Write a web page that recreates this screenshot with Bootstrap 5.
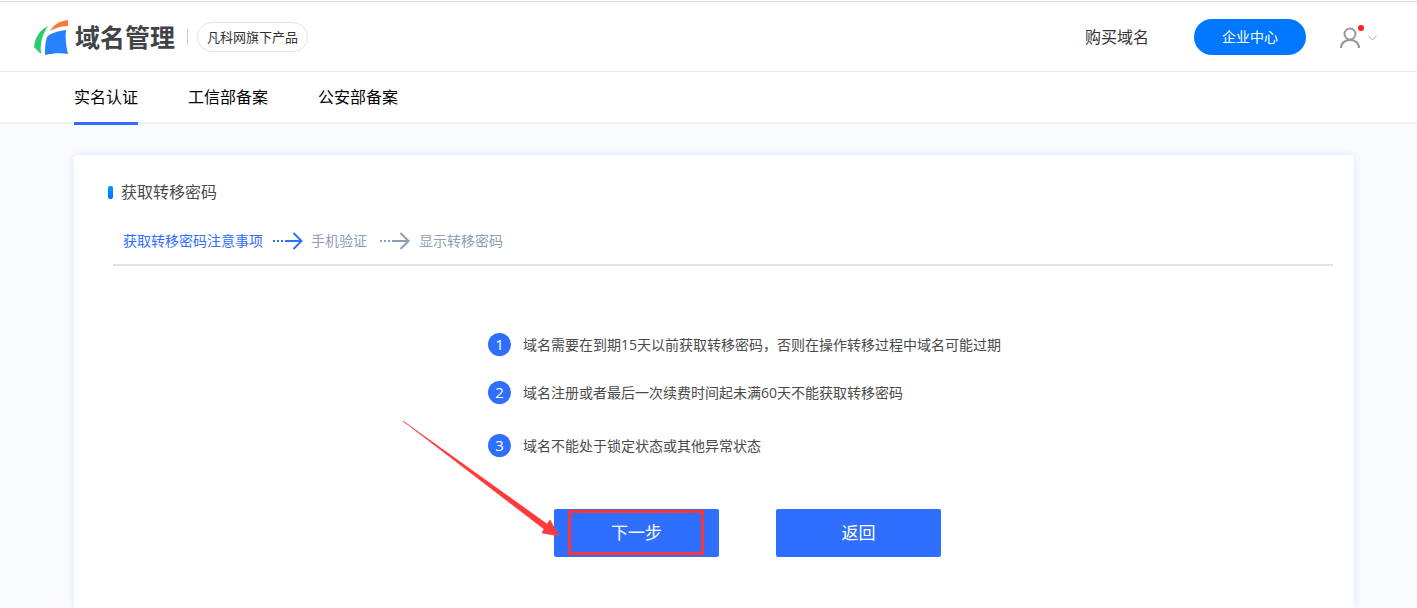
<!DOCTYPE html>
<html lang="zh-CN">
<head>
<meta charset="utf-8">
<meta name="viewport" content="width=device-width, initial-scale=1">
<title>域名管理</title>
<link rel="stylesheet" href="https://cdn.jsdelivr.net/npm/bootstrap@5.3.0/dist/css/bootstrap.min.css">
<style>
  body { font-family: "Open Sans", "Noto Sans CJK SC", sans-serif; font-size: 14px; line-height: 20px; color: #4a4a4a; background: #f9fbff; }
  a { text-decoration: none; }
  .top-gap { height: 1px; }
  .site-header { height: 71px; border-top: 1px solid #d9dbdc; border-bottom: 1px solid #ebebeb; padding: 0 40px 0 34px; }
  .brand-name { font-size: 25px; line-height: 36px; font-weight: 700; color: #414348; margin-left: 6px; }
  .brand-rule { width: 1px; height: 16px; background: #ccc; margin: 0 9px 0 12px; }
  .family-link { height: 30px; padding: 0 9px; border: 1px solid #e3e3e3; border-radius: 15px; font-size: 13px; line-height: 28px; color: #333; }
  .buy-link { font-size: 16px; color: #333; margin-right: 45px; }
  .center-btn { width: 112px; height: 36px; background: #0077ff; color: #fff; font-size: 14px; line-height: 20px; margin-right: 33px; padding: 0; border: 0; }
  .center-btn:hover { background: #0069e6; color: #fff; }
  .page-wrap { width: 100%; max-width: 1291px; padding-left: 11px; margin: 0 auto; }
  .section-nav { background: #fff; border-bottom: 1px solid #ebf0f9; box-shadow: 0 1px 2px #eef3fb; }
  .section-nav .page-wrap { height: 50px; gap: 50px; }
  .tab-link { height: 53px; line-height: 50px; font-size: 16px; color: #000; border-bottom: 3px solid transparent; }
  .tab-link.active { border-color: #2e6fff; }
  .panel { margin-top: 32px; padding: 25px 21px 48px 34px; background: #fff; border-radius: 4px 4px 0 0; box-shadow: 0 0 8px #dae7fa; }
  .panel-title { font-size: 16px; line-height: 24px; font-weight: 400; color: #4a4a4a; gap: 8px; }
  .title-mark { width: 5px; height: 13px; border-radius: 2px; background: linear-gradient(#009dff, #0070ff); }
  .steps { margin: 22px 0 0 5px; padding: 5px 0 13px 10px; border-bottom: 2px solid #e3e3e3; color: #8e9eb2; gap: 8px; }
  .steps .current { color: #2e6fff; }
  .notice-area { padding-left: 49px; margin-top: 67px; }
  .notice { width: 514px; max-width: 100%; }
  .notice li { gap: 12px; margin-bottom: 25px; }
  .notice li:nth-child(2) { margin-bottom: 30px; }
  .num { width: 23px; height: 23px; flex: none; border-radius: 50%; background: #2e6fff; color: #fff; font-size: 15px; line-height: 23px; text-align: center; }
  .actions { gap: 57px; padding-left: 66px; margin-top: 52px; }
  .act { width: 165px; height: 48px; border: 0; border-radius: 2px; background: #2e6fff; color: #fff; font-size: 17px; line-height: 24px; padding: 0; }
  .act:hover { background: #1f60f0; color: #fff; }
  .marker-box { inset: 1px 15px 2px 14px; border: 3px solid #ff3535; }
  .marker-arrow { right: 160px; bottom: 19px; }
</style>
</head>
<body class="d-flex flex-column min-vh-100">
<div class="top-gap bg-white"></div>
<header class="site-header bg-white d-flex align-items-center">
  <a href="#" class="d-flex align-items-center" aria-label="域名管理">
    <svg width="35" height="38" viewBox="0 -2 35 38">
      <path d="M14 6C6 10 1 17 0 27l7 7c-1-11 1-19 7-28Z" fill="#2dcc70"/>
      <path d="M16 11C20 4 26 1 34 0v6c-7 0-13 2-18 5Z" fill="#ff7836"/>
      <path d="M32 10C24 11 17 13 13 17c-2 6-2 12-2 18 9-2 16-2 23-1-2-8-3-16-2-24Z" fill="#2681ff"/>
    </svg>
    <span class="brand-name">域名管理</span>
  </a>
  <span class="brand-rule"></span>
  <a href="#" class="family-link">凡科网旗下产品</a>
  <a href="#" class="buy-link ms-auto">购买域名</a>
  <button type="button" class="btn center-btn rounded-pill">企业中心</button>
  <button type="button" class="btn p-0 border-0 d-flex" aria-label="用户">
    <svg width="38" height="26" viewBox="0 0 38 26" fill="none">
      <g stroke="#999" stroke-width="2"><circle cx="11" cy="10" r="5.5"/><path d="M2 24c0-5 4-8 9-8s9 3 9 8"/></g>
      <circle cx="22" cy="4" r="3" fill="#ff1f1f"/>
      <path d="m29.500 12 4 4 4-4" stroke="#aaa"/>
    </svg>
  </button>
</header>
<nav class="section-nav">
  <div class="page-wrap d-flex">
    <a href="#" class="tab-link active" aria-current="page">实名认证</a>
    <a href="#" class="tab-link">工信部备案</a>
    <a href="#" class="tab-link">公安部备案</a>
  </div>
</nav>
<main class="page-wrap flex-grow-1 d-flex flex-column">
  <section class="panel flex-grow-1">
    <h1 class="panel-title d-flex align-items-center mb-0"><span class="title-mark"></span>获取转移密码</h1>
    <div class="steps d-flex align-items-center">
      <span class="current">获取转移密码注意事项</span>
      <svg class="current" width="32" height="18" viewBox="0 0 32 18" fill="none" stroke="currentColor" stroke-width="2"><path d="M2 9h11" stroke-dasharray="2 2"/><path d="M14 9h16M22.500 1l8 8-8 8"/></svg>
      <span>手机验证</span>
      <svg class="ms-1" width="32" height="18" viewBox="0 0 32 18" fill="none" stroke="currentColor" stroke-width="2"><path d="M1 9h11" stroke-dasharray="2 2"/><path d="M13 9h16M21.500 1l8 8-8 8"/></svg>
      <span>显示转移密码</span>
    </div>
    <div class="notice-area">
      <div class="notice mx-auto">
        <ol class="list-unstyled mb-0">
          <li class="d-flex align-items-center"><span class="num">1</span>域名需要在到期15天以前获取转移密码，否则在操作转移过程中域名可能过期</li>
          <li class="d-flex align-items-center"><span class="num">2</span>域名注册或者最后一次续费时间起未满60天不能获取转移密码</li>
          <li class="d-flex align-items-center mb-0"><span class="num">3</span>域名不能处于锁定状态或其他异常状态</li>
        </ol>
        <div class="actions d-flex">
          <div class="position-relative">
            <button type="button" class="btn act">下一步</button>
            <span class="marker-box position-absolute pe-none"></span>
            <svg class="marker-arrow position-absolute pe-none" width="158" height="118" viewBox="0 0 158 118"><path d="m2 1 144 103 3-4 9 16-17-3 2-4Z" fill="#ff3a3a" stroke="#ff3a3a" stroke-width=".6"/></svg>
          </div>
          <button type="button" class="btn act">返回</button>
        </div>
      </div>
    </div>
  </section>
</main>
<script src="https://cdn.jsdelivr.net/npm/bootstrap@5.3.0/dist/js/bootstrap.bundle.min.js"></script>
</body>
</html>
